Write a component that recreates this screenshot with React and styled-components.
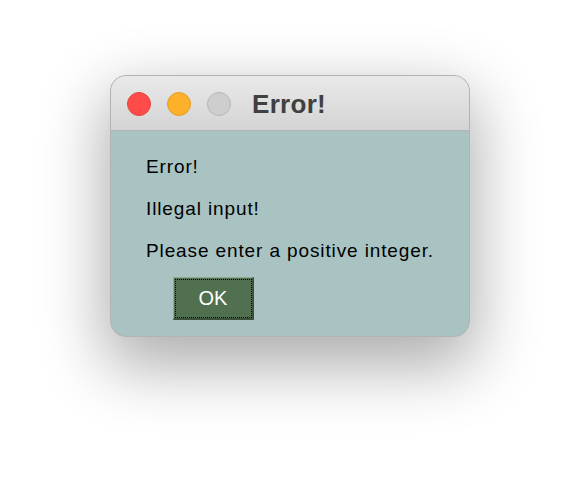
import styled, { createGlobalStyle } from "styled-components";

const GlobalStyle = createGlobalStyle`
  body {
    margin: 0;
    background: #ffffff;
    font-family: "Liberation Sans", Arial, sans-serif;
  }
`;

const Page = styled.div`
  display: flex;
  justify-content: center;
  padding-top: 75px;
  height: 484px;
  box-sizing: border-box;
`;

const Window = styled.div`
  width: 358px;
  align-self: flex-start;
  border: 1px solid #b3b3b3;
  border-radius: 16px;
  overflow: hidden;
  box-shadow: 0 24px 64px 6px rgba(0, 0, 0, 0.32);
  background: #a9c3c3;
`;

const TitleBar = styled.div`
  display: flex;
  align-items: center;
  height: 55px;
  box-sizing: border-box;
  padding: 2px 0 0 16px;
  background: linear-gradient(#e9e9e9, #d4d4d4);
  border-bottom: 1px solid #b4b4b4;
`;

const Light = styled.span`
  width: 24px;
  height: 24px;
  box-sizing: border-box;
  border-radius: 50%;
  margin-right: 16px;
  background: ${(p) => p.fill};
  border: 1px solid ${(p) => p.edge};
`;

const Title = styled.div`
  margin-left: 5px;
  font-size: 26px;
  font-weight: bold;
  letter-spacing: 0.3px;
  color: #404040;
`;

const Body = styled.div`
  padding: 15px 0 16px 35px;
`;

const Line = styled.div`
  font-size: 19px;
  line-height: 42px;
  letter-spacing: 0.88px;
  color: #000;
`;

const OkButton = styled.button`
  display: block;
  margin: 5px 0 0 27px;
  width: 81px;
  height: 43px;
  padding: 0;
  box-sizing: border-box;
  background: #51704f;
  color: #fff;
  font-family: "Liberation Sans", Arial, sans-serif;
  font-size: 20px;
  border-style: solid;
  border-width: 1px 2px 2px 1px;
  border-color: #90a68e #3c503c #3c503c #90a68e;
  outline: 1px dotted #000;
  outline-offset: -3px;
`;

export default function App() {
  return (
    <>
      <GlobalStyle />
      <Page>
        <Window>
          <TitleBar>
            <Light fill="#ff4b4a" edge="#e2463f" />
            <Light fill="#fdb12b" edge="#df9f22" />
            <Light fill="#cecece" edge="#b6b6b6" />
            <Title>Error!</Title>
          </TitleBar>
          <Body>
            <Line>Error!</Line>
            <Line>Illegal input!</Line>
            <Line>Please enter a positive integer.</Line>
            <OkButton>OK</OkButton>
          </Body>
        </Window>
      </Page>
    </>
  );
}
